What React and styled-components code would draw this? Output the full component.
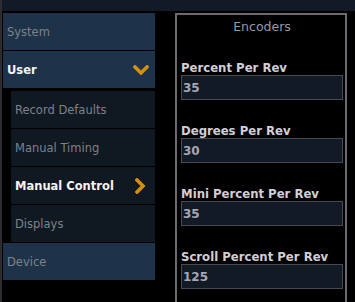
import React from 'react'
import styled, { createGlobalStyle } from 'styled-components'

const GlobalStyle = createGlobalStyle`
  html, body {
    margin: 0;
    padding: 0;
    background: #000;
    font-family: "DejaVu Sans", Verdana, sans-serif;
  }
`

const Screen = styled.div`
  height: 100vh;
  display: flex;
  flex-direction: column;
  border-left: 2px solid #2c2d30;
  overflow: hidden;
  box-sizing: border-box;
`

const TopBar = styled.div`
  height: 11px;
  background: #111a25;
  margin-bottom: 2px;
  flex-shrink: 0;
`

const Body = styled.div`
  flex: 1;
  display: flex;
  padding-left: 1px;
`

const Nav = styled.nav`
  width: 152px;
  display: flex;
  flex-direction: column;
  gap: 1px;
`

const SubGroup = styled.div`
  display: flex;
  flex-direction: column;
  gap: 1px;
  padding-left: 8px;
  margin-top: 2px;
`

const NavItem = styled.div`
  height: 37px;
  flex-shrink: 0;
  display: flex;
  align-items: center;
  justify-content: space-between;
  padding: 0 ${p => (p.$sub ? '9px' : '6px')} 0 4px;
  box-sizing: border-box;
  background: ${p => (p.$sub ? '#101821' : '#1e3249')};
  color: ${p => (p.$active ? '#f4f4f4' : '#7b838b')};
  font-size: 11.5px;
  font-weight: ${p => (p.$active ? 700 : 400)};
`

const Panel = styled.section`
  margin-left: 20px;
  width: 172px;
  box-sizing: border-box;
  border: 2px solid #6b6870;
  border-bottom: none;
  padding: 4px 2px 0 4px;
`

const Title = styled.div`
  text-align: center;
  font-size: 12.5px;
  line-height: 16px;
  color: #9b98a2;
  margin-bottom: 26px;
`

const Field = styled.div`
  margin-bottom: 24px;
`

const Label = styled.div`
  font-size: 11.7px;
  line-height: 14px;
  font-weight: 700;
  color: #d2ced6;
  white-space: nowrap;
`

const ValueBox = styled.div`
  height: 25px;
  box-sizing: border-box;
  border: 1px solid #4a4953;
  background: #111a25;
  display: flex;
  align-items: center;
  padding-left: 1px;
  font-size: 12px;
  font-weight: 700;
  color: #a9a5b1;
`

const ChevronDown = () => (
  <svg width="16" height="10" viewBox="0 0 16 10">
    <polyline points="2,2 8,8 14,2" fill="none" stroke="#d48f0d" strokeWidth="3.6" strokeLinecap="square" />
  </svg>
)

const ChevronRight = () => (
  <svg width="11" height="16" viewBox="0 0 11 16">
    <polyline points="2,2 8,8 2,14" fill="none" stroke="#d48f0d" strokeWidth="3.6" strokeLinecap="square" />
  </svg>
)

const fields = [
  { label: 'Percent Per Rev', value: '35' },
  { label: 'Degrees Per Rev', value: '30' },
  { label: 'Mini Percent Per Rev', value: '35' },
  { label: 'Scroll Percent Per Rev', value: '125' },
]

const subItems = ['Record Defaults', 'Manual Timing', 'Manual Control', 'Displays']

export default function App() {
  return (
    <>
      <GlobalStyle />
      <Screen>
        <TopBar />
        <Body>
          <Nav>
            <NavItem>System</NavItem>
            <NavItem $active>
              User
              <ChevronDown />
            </NavItem>
            <SubGroup>
              {subItems.map(name => (
                <NavItem key={name} $sub $active={name === 'Manual Control'}>
                  {name}
                  {name === 'Manual Control' && <ChevronRight />}
                </NavItem>
              ))}
            </SubGroup>
            <NavItem>Device</NavItem>
          </Nav>
          <Panel>
            <Title>Encoders</Title>
            {fields.map(f => (
              <Field key={f.label}>
                <Label>{f.label}</Label>
                <ValueBox>{f.value}</ValueBox>
              </Field>
            ))}
          </Panel>
        </Body>
      </Screen>
    </>
  )
}
